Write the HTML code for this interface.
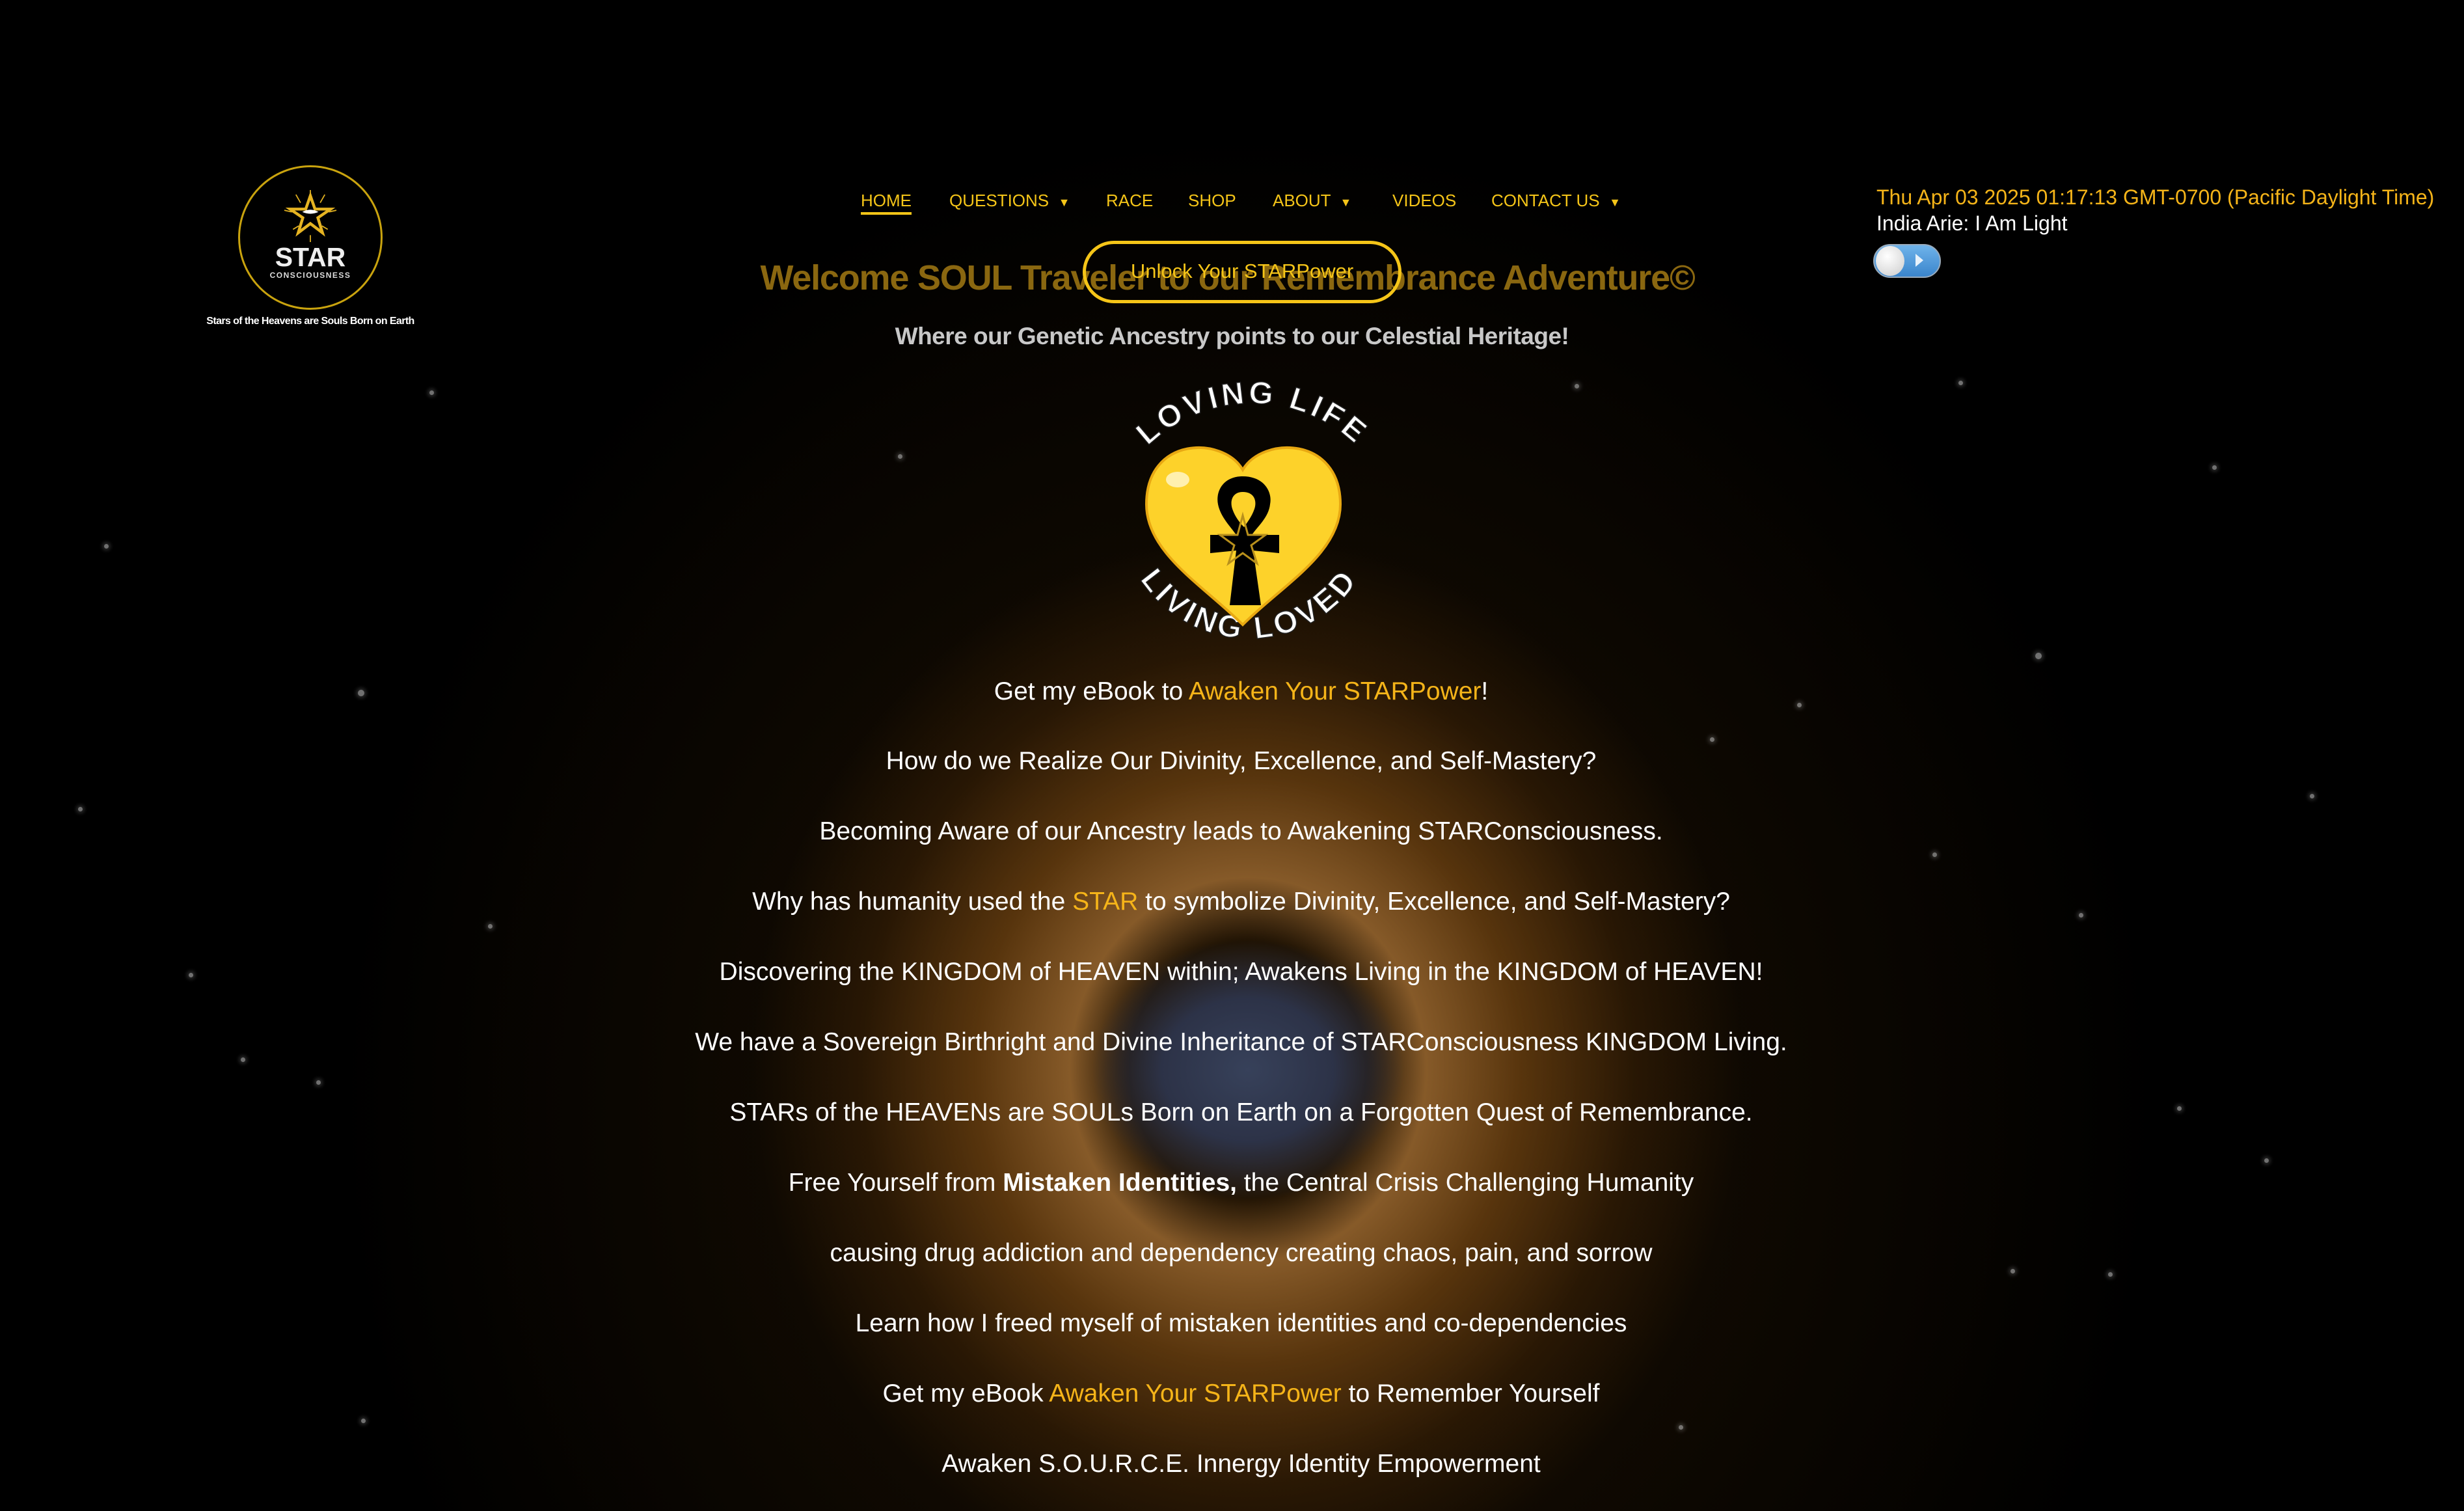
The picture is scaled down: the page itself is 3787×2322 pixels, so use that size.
<!DOCTYPE html>
<html><head><meta charset="utf-8">
<style>
html,body{margin:0;padding:0;}
body{width:3787px;height:2322px;position:relative;overflow:hidden;background:#000;font-family:"Liberation Sans",sans-serif;}
.glow{position:absolute;left:0;top:0;width:3787px;height:2322px;
background:
radial-gradient(ellipse 240px 200px at 1918px 1644px, rgba(55,65,90,1) 0%, rgba(45,52,75,0.95) 55%, rgba(0,0,0,0) 100%),
radial-gradient(ellipse 760px 820px at 1918px 1644px, rgba(0,0,0,0) 24%, rgba(160,108,50,0.8) 36%, rgba(130,78,20,0.6) 55%, rgba(80,45,8,0.35) 78%, rgba(0,0,0,0) 100%),
radial-gradient(ellipse 1400px 1500px at 1918px 1700px, rgba(70,42,8,0.55) 0%, rgba(40,24,4,0.4) 50%, rgba(0,0,0,0) 100%);}
.abs{position:absolute;}
.nav{position:absolute;top:293px;font-size:26px;color:#f5c518;white-space:nowrap;}
.c{position:absolute;left:14px;width:3787px;text-align:center;color:#fff;font-size:39px;white-space:nowrap;}
.o{color:#f5b419;}
.star{position:absolute;width:7px;height:7px;border-radius:50%;background:#bbb;opacity:.6;box-shadow:0 0 6px 3px rgba(200,200,200,.35);}
</style></head><body>
<div class="glow"></div>
<div class="star" style="left:160px;top:836px"></div>
<div class="star" style="left:555px;top:2180px"></div>
<div class="star" style="left:486px;top:1660px"></div>
<div class="star" style="left:750px;top:1420px"></div>
<div class="star" style="left:3400px;top:715px"></div>
<div class="star" style="left:3128px;top:1003px;width:10px;height:10px"></div>
<div class="star" style="left:2970px;top:1310px"></div>
<div class="star" style="left:3195px;top:1403px"></div>
<div class="star" style="left:3090px;top:1950px"></div>
<div class="star" style="left:3240px;top:1955px"></div>
<div class="star" style="left:2628px;top:1133px"></div>
<div class="star" style="left:2420px;top:590px"></div>
<div class="star" style="left:290px;top:1495px"></div>
<div class="star" style="left:550px;top:1060px;width:10px;height:10px"></div>
<div class="star" style="left:370px;top:1625px"></div>
<div class="star" style="left:660px;top:600px"></div>
<div class="star" style="left:1380px;top:698px"></div>
<div class="star" style="left:2580px;top:2190px"></div>
<div class="star" style="left:3550px;top:1220px"></div>
<div class="star" style="left:3010px;top:585px"></div>
<div class="star" style="left:120px;top:1240px"></div>
<div class="star" style="left:3480px;top:1780px"></div>
<div class="star" style="left:2762px;top:1080px"></div>
<div class="star" style="left:3346px;top:1700px"></div>

<!-- logo -->
<div class="abs" style="left:366px;top:254px;width:222px;height:222px;border:3px solid #c9a30e;border-radius:50%;box-sizing:border-box;"></div>
<svg class="abs" style="left:432px;top:292px" width="90" height="80" viewBox="0 0 100 90">
<g stroke="#e0b020" stroke-width="2"><line x1="50" y1="0" x2="50" y2="12"/><line x1="25" y1="8" x2="33" y2="22"/><line x1="75" y1="8" x2="67" y2="22"/><line x1="5" y1="35" x2="18" y2="38"/><line x1="95" y1="35" x2="82" y2="38"/><line x1="20" y1="68" x2="30" y2="62"/><line x1="80" y1="68" x2="70" y2="62"/><line x1="50" y1="78" x2="50" y2="90"/></g>
<polygon points="50,10 58,33 85,33 63,48 71,74 50,58 29,74 37,48 15,33 42,33" fill="none" stroke="#e6b422" stroke-width="5"/>
<path d="M36 38 Q50 30 64 38 Q50 44 36 38" fill="#fff"/>
</svg>
<div class="abs" style="left:366px;top:372px;width:222px;text-align:center;color:#eee;font-weight:bold;font-size:41px;">STAR</div>
<div class="abs" style="left:366px;top:416px;width:222px;text-align:center;color:#ddd;font-weight:bold;font-size:12px;letter-spacing:1.5px">CONSCIOUSNESS</div>
<div class="abs" style="left:277px;top:485px;width:400px;text-align:center;color:#fff;font-weight:bold;font-size:16px;letter-spacing:-0.6px;white-space:nowrap">Stars of the Heavens are Souls Born on Earth</div>

<!-- nav -->
<div class="nav" style="left:1323px;">HOME</div>
<div class="abs" style="left:1323px;top:326px;width:78px;height:4px;background:#f5c518"></div>
<div class="nav" style="left:1459px;">QUESTIONS &nbsp;<span style="font-size:18px">▼</span></div>
<div class="nav" style="left:1700px;">RACE</div>
<div class="nav" style="left:1826px;">SHOP</div>
<div class="nav" style="left:1956px;">ABOUT &nbsp;<span style="font-size:18px">▼</span></div>
<div class="nav" style="left:2140px;">VIDEOS</div>
<div class="nav" style="left:2292px;">CONTACT US &nbsp;<span style="font-size:18px">▼</span></div>

<!-- title -->
<div class="c" style="left:-7px;top:396px;font-size:54px;color:#8a6710;font-weight:bold;letter-spacing:-1.2px;">Welcome SOUL Traveler to our Remembrance Adventure©</div>
<div class="abs" style="left:1664px;top:370px;width:490px;height:96px;border:5px solid #f5c518;border-radius:48px;box-sizing:border-box;"></div>
<div class="abs" style="left:1664px;top:399px;width:490px;text-align:center;font-size:31px;color:#f5c518;">Unlock Your STARPower</div>
<div class="c" style="left:0;top:496px;font-size:37px;color:#c8c8c8;font-weight:bold;letter-spacing:-0.5px;">Where our Genetic Ancestry points to our Celestial Heritage!</div>

<!-- heart graphic -->
<svg class="abs" style="left:1700px;top:560px" width="450" height="460" viewBox="0 0 450 460">
<defs>
<path id="arcT" d="M55 135 A230 230 0 0 1 395 135"/>
<path id="arcB" d="M45 318 A200 200 0 0 0 395 318"/>
</defs>
<text font-family="Liberation Sans" font-weight="bold" font-size="48" fill="#fff" stroke="#222" stroke-width="1.5" letter-spacing="5"><textPath href="#arcT" startOffset="50%" text-anchor="middle">LOVING LIFE</textPath></text>
<text font-family="Liberation Sans" font-weight="bold" font-size="48" fill="#fff" stroke="#222" stroke-width="1.5" letter-spacing="5"><textPath href="#arcB" startOffset="50%" text-anchor="middle">LIVING LOVED</textPath></text>
<path d="M210 162 C180 110 62 110 62 215 C62 290 150 340 210 400 C270 340 360 290 360 215 C360 110 240 110 210 162 Z" fill="#fdd22a" stroke="#e8a812" stroke-width="4"/>
<ellipse cx="110" cy="177" rx="18" ry="12" fill="#fff8d0" opacity=".8"/>
<path d="M210 172 C180 172 168 195 172 215 C176 235 192 250 200 262 L160 262 L160 290 L200 286 L190 370 L238 370 L226 286 L266 290 L266 262 L224 262 C232 250 250 235 252 215 C256 195 242 172 210 172 Z M210 196 C228 196 232 210 228 222 C224 234 216 244 212 250 C206 244 198 234 194 222 C190 210 194 196 210 196 Z" fill="#000" fill-rule="evenodd"/>
<polygon points="210,232 218,262 245,262 223,278 232,306 210,290 188,306 197,278 175,262 202,262" fill="none" stroke="#b8901c" stroke-width="3"/>
</svg>

<!-- body lines -->
<div class="c" style="top:1041px">Get my eBook to <span class="o">Awaken Your STARPower</span>!</div>
<div class="c" style="top:1148px">How do we Realize Our Divinity, Excellence, and Self-Mastery?</div>
<div class="c" style="top:1256px">Becoming Aware of our Ancestry leads to Awakening STARConsciousness.</div>
<div class="c" style="top:1364px">Why has humanity used the <span class="o">STAR</span> to symbolize Divinity, Excellence, and Self-Mastery?</div>
<div class="c" style="top:1472px">Discovering the KINGDOM of HEAVEN within; Awakens Living in the KINGDOM of HEAVEN!</div>
<div class="c" style="top:1580px">We have a Sovereign Birthright and Divine Inheritance of STARConsciousness KINGDOM Living.</div>
<div class="c" style="top:1688px">STARs of the HEAVENs are SOULs Born on Earth on a Forgotten Quest of Remembrance.</div>
<div class="c" style="top:1796px">Free Yourself from <b>Mistaken Identities,</b> the Central Crisis Challenging Humanity</div>
<div class="c" style="top:1904px">causing drug addiction and dependency creating chaos, pain, and sorrow</div>
<div class="c" style="top:2012px">Learn how I freed myself of mistaken identities and co-dependencies</div>
<div class="c" style="top:2120px">Get my eBook <span class="o">Awaken Your STARPower</span> to Remember Yourself</div>
<div class="c" style="top:2228px">Awaken S.O.U.R.C.E. Innergy Identity Empowerment</div>

<!-- right side -->
<div class="abs" style="left:2884px;top:285px;font-size:32px;color:#f5b419;white-space:nowrap;">Thu Apr 03 2025 01:17:13 GMT-0700 (Pacific Daylight Time)</div>
<div class="abs" style="left:2884px;top:325px;font-size:32px;color:#fff;white-space:nowrap;">India Arie: I Am Light</div>
<div class="abs" style="left:2879px;top:375px;width:104px;height:52px;border-radius:26px;background:linear-gradient(#6fb3ea,#3a85cc);border:2px solid #9ab;box-sizing:border-box;"></div>
<div class="abs" style="left:2883px;top:378px;width:44px;height:46px;border-radius:50%;background:radial-gradient(circle at 40% 35%,#fff,#ccc);"></div>
<div class="abs" style="left:2944px;top:390px;width:0;height:0;border-top:10px solid transparent;border-bottom:10px solid transparent;border-left:12px solid #e8f2fb;"></div>
</body></html>
